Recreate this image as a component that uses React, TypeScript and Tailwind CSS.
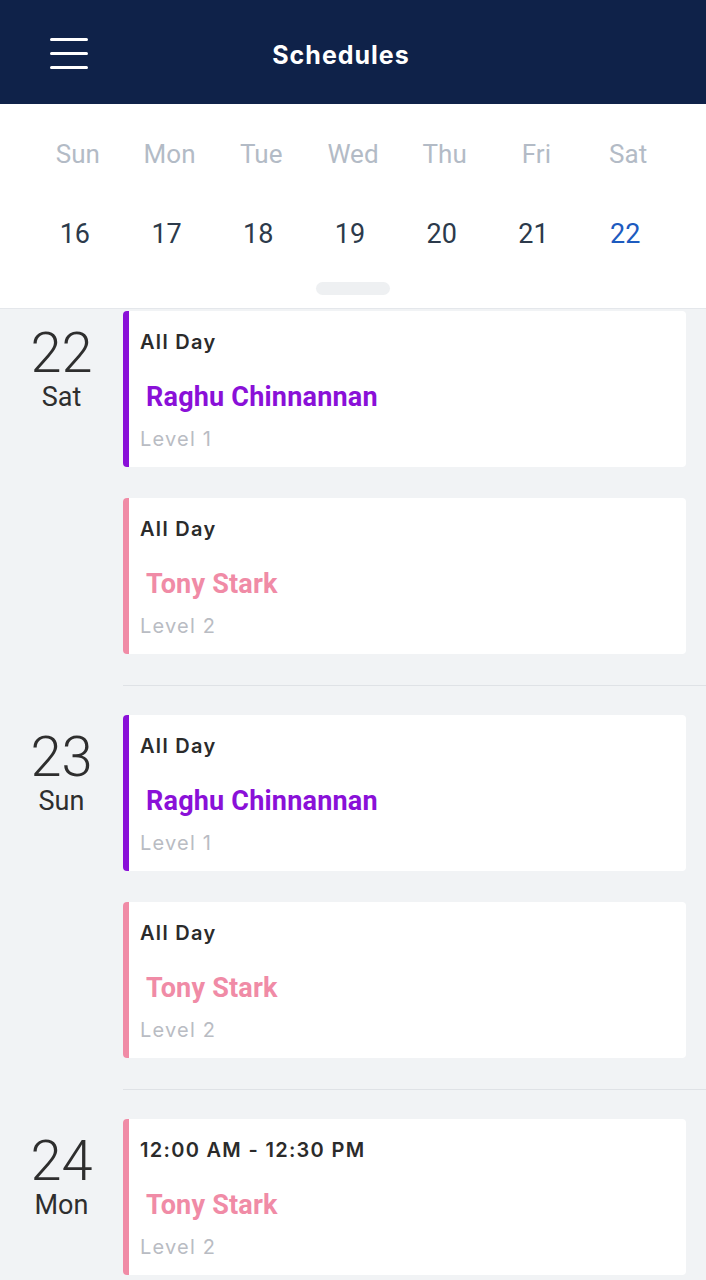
type Shift = { time: string; name: string; level: string; color: 'purple' | 'pink' }

const week = [
  { d: 'Sun', n: 16 },
  { d: 'Mon', n: 17 },
  { d: 'Tue', n: 18 },
  { d: 'Wed', n: 19 },
  { d: 'Thu', n: 20 },
  { d: 'Fri', n: 21 },
  { d: 'Sat', n: 22 },
]

const days: { date: number; day: string; shifts: Shift[] }[] = [
  {
    date: 22,
    day: 'Sat',
    shifts: [
      { time: 'All Day', name: 'Raghu Chinnannan', level: 'Level 1', color: 'purple' },
      { time: 'All Day', name: 'Tony Stark', level: 'Level 2', color: 'pink' },
    ],
  },
  {
    date: 23,
    day: 'Sun',
    shifts: [
      { time: 'All Day', name: 'Raghu Chinnannan', level: 'Level 1', color: 'purple' },
      { time: 'All Day', name: 'Tony Stark', level: 'Level 2', color: 'pink' },
    ],
  },
  {
    date: 24,
    day: 'Mon',
    shifts: [{ time: '12:00 AM - 12:30 PM', name: 'Tony Stark', level: 'Level 2', color: 'pink' }],
  },
]

const ShiftCard = ({ shift }: { shift: Shift }) => {
  const purple = shift.color === 'purple'
  return (
    <div className="flex bg-white rounded-[4px] h-[156px] shrink-0">
      <div className={`w-[6px] rounded-l-[4px] ${purple ? 'bg-[#8a10d8]' : 'bg-[#f08ba6]'}`} />
      <div className="flex-1 pl-[11px] pt-[19px] font-['Inter',sans-serif]">
        <div className="text-[20px] leading-[24px] font-semibold text-[#2b2b2b] tracking-[1.3px]">{shift.time}</div>
        <div
          className={`mt-[28px] pl-[6px] font-['Roboto',sans-serif] font-bold text-[27px] leading-[30px] tracking-[0.2px] ${
            purple ? 'text-[#8a10d8]' : 'text-[#f08ba6]'
          }`}
        >
          {shift.name}
        </div>
        <div className="mt-[15px] text-[20px] leading-[24px] text-[#b9bcc3] tracking-[1.2px]">{shift.level}</div>
      </div>
    </div>
  )
}

export default function App() {
  return (
    <div className="w-[706px] h-[1280px] overflow-hidden bg-[#f1f3f5] flex flex-col">
      <header className="h-[104px] shrink-0 bg-[#0f2249] flex items-center pl-[50px] pr-[112px]">
        <svg width="38" height="31" viewBox="0 0 38 31" className="mt-[3px]">
          <rect x="0" y="0" width="38" height="3" rx="1.5" fill="#fff" />
          <rect x="0" y="14" width="38" height="3" rx="1.5" fill="#fff" />
          <rect x="0" y="28" width="38" height="3" rx="1.5" fill="#fff" />
        </svg>
        <h1 className="flex-1 mt-[7px] text-center text-white font-['Inter',sans-serif] font-bold text-[25px] tracking-[1px]">
          Schedules
        </h1>
      </header>

      <div className="shrink-0 bg-white border-b border-[#e4e7eb] pt-[36px] pb-[13px] font-['Roboto',sans-serif]">
        <div className="grid grid-cols-7 px-[32px]">
          {week.map((w) => (
            <div key={w.d} className="text-center text-[26px] leading-[28px] text-[#b3bbc6]">
              {w.d}
            </div>
          ))}
        </div>
        <div className="grid grid-cols-7 px-[32px] mt-[51px]">
          {week.map((w) => (
            <div
              key={w.n}
              className={`text-center text-[27px] leading-[30px] -translate-x-[3px] ${
                w.n === 22 ? 'text-[#1d5bbf]' : 'text-[#2c3a4b]'
              }`}
            >
              {w.n}
            </div>
          ))}
        </div>
        <div className="mx-auto mt-[33px] w-[74px] h-[13px] rounded-full bg-[#eef0f2]" />
      </div>

      <div className="pt-[2px] shrink-0">
        {days.map((day, i) => (
          <div key={day.date}>
            <div className={`flex ${i === 0 ? 'pt-0' : 'pt-[29px]'} pb-[31px]`}>
              <div className="w-[123px] flex flex-col items-center pt-[14px] font-['Roboto',sans-serif] text-[#2e2e2e]">
                <div className="text-[56px] leading-[56px] font-light">{day.date}</div>
                <div className="mt-[2px] text-[27px] leading-[28px]">{day.day}</div>
              </div>
              <div className="flex-1 pr-[20px] flex flex-col gap-[31px]">
                {day.shifts.map((s, j) => (
                  <ShiftCard key={j} shift={s} />
                ))}
              </div>
            </div>
            {i < days.length - 1 && <div className="ml-[123px] h-px bg-[#dfe2e6]" />}
          </div>
        ))}
      </div>
    </div>
  )
}
